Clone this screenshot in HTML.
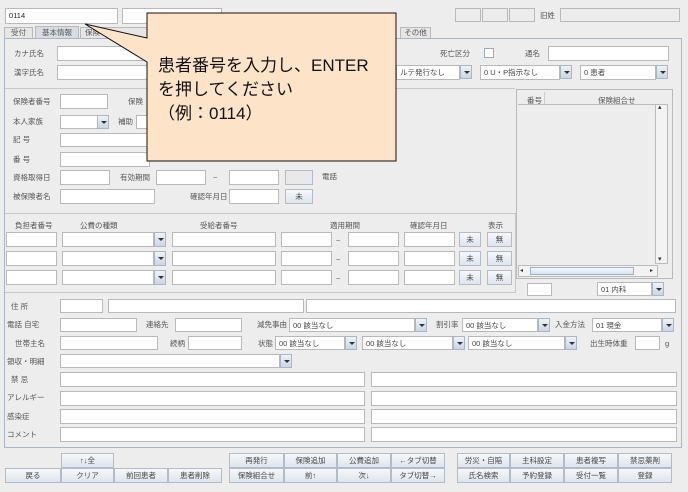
<!DOCTYPE html>
<html><head><meta charset="utf-8"><style>
*{margin:0;padding:0;box-sizing:border-box}
body{width:688px;height:492px;background:#ededed;position:relative;overflow:hidden;font-family:"Liberation Sans","Noto Sans CJK JP",sans-serif;font-size:7.5px;color:#555}
div{position:absolute}
.f{background:#fff;border:1px solid #b9b9b9}
.l{white-space:nowrap;line-height:10px}
.a{background:linear-gradient(#eef3f8,#c9d6e3);border:1px solid #a9b6c4;width:12px;height:14px}
.a:after{content:"";position:absolute;left:3px;top:5px;border-left:3px solid transparent;border-right:3px solid transparent;border-top:3px solid #333}
.b{background:linear-gradient(#f6f8fa,#dde5ee);border:1px solid #b1bcc8;text-align:center;line-height:13px;font-size:7.5px;color:#444}
.t{font-size:7.5px;color:#444;white-space:nowrap;line-height:13px;padding-left:3px}
</style></head><body>
<div class="f" style="left:5px;top:8px;width:113px;height:16px"><span class="t" style="color:#222">0114</span></div>
<div class="f" style="left:122px;top:8px;width:100px;height:16px"></div>
<div class="f" style="left:455px;top:8px;width:26px;height:14px;background:#ececec"></div>
<div class="f" style="left:482px;top:8px;width:26px;height:14px;background:#ececec"></div>
<div class="f" style="left:509px;top:8px;width:26px;height:14px;background:#ececec"></div>
<div class="l" style="left:540px;top:11px">旧姓</div>
<div class="f" style="left:560px;top:8px;width:120px;height:14px;background:#ececec"></div>
<div class="f" style="left:4px;top:27px;width:29px;height:12px;background:#e6e6e6;text-align:center;line-height:10px">受付</div>
<div class="f" style="left:35px;top:26px;width:44px;height:13px;background:#d8dde4;text-align:center;line-height:11px;border-bottom:none">基本情報</div>
<div class="f" style="left:80px;top:27px;width:70px;height:12px;background:#e6e6e6;line-height:10px;padding-left:4px">保険</div>
<div class="f" style="left:400px;top:27px;width:31px;height:12px;background:#e6e6e6;text-align:center;line-height:10px">その他</div>
<div style="left:4px;top:38px;width:678px;height:410px;border:1px solid #aab6c4"></div>
<div class="l" style="left:14px;top:49px">カナ氏名</div>
<div class="f" style="left:57px;top:46px;width:100px;height:15px"></div>
<div class="l" style="left:14px;top:68px">漢字氏名</div>
<div class="f" style="left:57px;top:65px;width:100px;height:15px"></div>
<div class="l" style="left:440px;top:49px">死亡区分</div>
<div class="f" style="left:484px;top:48px;width:10px;height:10px;border-color:#9ab"></div>
<div class="l" style="left:525px;top:49px">通名</div>
<div class="f" style="left:548px;top:46px;width:121px;height:15px"></div>
<div class="f" style="left:396px;top:65px;width:64px;height:15px"><span class="t">ルテ発行なし</span></div><div class="a" style="left:460px;top:65px"></div>
<div class="f" style="left:480px;top:65px;width:80px;height:15px"><span class="t">0 U・P指示なし</span></div><div class="a" style="left:560px;top:65px"></div>
<div class="f" style="left:580px;top:65px;width:76px;height:15px"><span class="t">0 患者</span></div><div class="a" style="left:656px;top:65px"></div>
<div style="left:5px;top:88px;width:510px;height:1px;background:#c8c8c8"></div>
<div class="l" style="left:13px;top:97px">保険者番号</div><div class="f" style="left:60px;top:94px;width:48px;height:15px"></div>
<div class="l" style="left:128px;top:97px">保険</div>
<div class="l" style="left:13px;top:117px">本人家族</div><div class="f" style="left:60px;top:115px;width:38px;height:14px"></div><div class="a" style="left:97px;top:115px"></div>
<div class="l" style="left:118px;top:117px">補助</div><div class="f" style="left:136px;top:115px;width:20px;height:14px"></div>
<div class="l" style="left:13px;top:135px">記 号</div><div class="f" style="left:60px;top:133px;width:90px;height:14px"></div>
<div class="l" style="left:13px;top:155px">番 号</div><div class="f" style="left:60px;top:152px;width:90px;height:15px"></div>
<div class="l" style="left:13px;top:173px">資格取得日</div><div class="f" style="left:60px;top:170px;width:50px;height:15px"></div>
<div class="l" style="left:120px;top:173px">有効期間</div><div class="f" style="left:156px;top:170px;width:50px;height:15px"></div>
<div class="l" style="left:213px;top:173px">~</div><div class="f" style="left:229px;top:170px;width:50px;height:15px"></div>
<div class="b" style="left:285px;top:170px;width:28px;height:15px;background:#e9e9e9"></div>
<div class="l" style="left:322px;top:172px">電話</div>
<div class="l" style="left:13px;top:192px">被保険者名</div><div class="f" style="left:60px;top:189px;width:95px;height:15px"></div>
<div class="l" style="left:190px;top:192px">確認年月日</div><div class="f" style="left:229px;top:189px;width:50px;height:15px"></div>
<div class="b" style="left:285px;top:189px;width:28px;height:15px">未</div>
<div style="left:516px;top:89px;width:157px;height:190px;border:1px solid #b9b9b9"></div>
<div class="l" style="left:527px;top:96px">番号</div>
<div class="l" style="left:598px;top:96px">保険組合せ</div>
<div style="left:518px;top:104px;width:137px;height:1px;background:#bbb"></div>
<div style="left:544px;top:92px;width:1px;height:12px;background:#ccc"></div>
<div style="left:655px;top:104px;width:13px;height:160px;border:1px solid #bbb;background:#f3f3f3"></div>
<div class="l" style="left:658px;top:103px;font-size:7px;color:#333">▴</div>
<div class="l" style="left:658px;top:255px;font-size:7px;color:#333">▾</div>
<div style="left:518px;top:265px;width:140px;height:12px;border:1px solid #bbb;background:#f3f3f3"></div>
<div style="left:530px;top:267px;width:104px;height:8px;border:1px solid #9cb0c8;background:linear-gradient(#f4f8fc,#d6e2ee)"></div>
<div class="l" style="left:520px;top:266px;font-size:6px;color:#333">◂</div>
<div class="l" style="left:650px;top:266px;font-size:6px;color:#333">▸</div>
<div class="f" style="left:527px;top:283px;width:25px;height:13px"></div>
<div class="f" style="left:597px;top:282px;width:55px;height:14px"><span class="t">01 内科</span></div><div class="a" style="left:652px;top:282px"></div>
<div style="left:5px;top:213px;width:511px;height:1px;background:#c8c8c8"></div>
<div style="left:515px;top:213px;width:1px;height:80px;background:#c8c8c8"></div>
<div class="l" style="left:15px;top:221px">負担者番号</div>
<div class="l" style="left:80px;top:221px">公費の種類</div>
<div class="l" style="left:200px;top:221px">受給者番号</div>
<div class="l" style="left:330px;top:221px">適用期間</div>
<div class="l" style="left:410px;top:221px">確認年月日</div>
<div class="l" style="left:488px;top:221px">表示</div>
<div style="left:0;top:232px">
<div class="f" style="left:6px;top:0;width:51px;height:15px"></div><div class="f" style="left:62px;top:0;width:92px;height:15px"></div><div class="a" style="left:154px;top:0;height:15px"></div><div class="f" style="left:172px;top:0;width:104px;height:15px"></div><div class="f" style="left:281px;top:0;width:51px;height:15px"></div><div class="l" style="left:336px;top:4px">~</div><div class="f" style="left:348px;top:0;width:51px;height:15px"></div><div class="f" style="left:404px;top:0;width:51px;height:15px"></div><div class="b" style="left:459px;top:0;width:22px;height:15px">未</div><div class="b" style="left:487px;top:0;width:25px;height:15px">無</div></div>
<div style="left:0;top:251px">
<div class="f" style="left:6px;top:0;width:51px;height:15px"></div><div class="f" style="left:62px;top:0;width:92px;height:15px"></div><div class="a" style="left:154px;top:0;height:15px"></div><div class="f" style="left:172px;top:0;width:104px;height:15px"></div><div class="f" style="left:281px;top:0;width:51px;height:15px"></div><div class="l" style="left:336px;top:4px">~</div><div class="f" style="left:348px;top:0;width:51px;height:15px"></div><div class="f" style="left:404px;top:0;width:51px;height:15px"></div><div class="b" style="left:459px;top:0;width:22px;height:15px">未</div><div class="b" style="left:487px;top:0;width:25px;height:15px">無</div></div>
<div style="left:0;top:270px">
<div class="f" style="left:6px;top:0;width:51px;height:15px"></div><div class="f" style="left:62px;top:0;width:92px;height:15px"></div><div class="a" style="left:154px;top:0;height:15px"></div><div class="f" style="left:172px;top:0;width:104px;height:15px"></div><div class="f" style="left:281px;top:0;width:51px;height:15px"></div><div class="l" style="left:336px;top:4px">~</div><div class="f" style="left:348px;top:0;width:51px;height:15px"></div><div class="f" style="left:404px;top:0;width:51px;height:15px"></div><div class="b" style="left:459px;top:0;width:22px;height:15px">未</div><div class="b" style="left:487px;top:0;width:25px;height:15px">無</div></div>
<div style="left:5px;top:292px;width:511px;height:1px;background:#c8c8c8"></div>
<div class="l" style="left:11px;top:302px">住 所</div>
<div class="f" style="left:60px;top:299px;width:43px;height:14px"></div><div class="f" style="left:108px;top:299px;width:196px;height:14px"></div><div class="f" style="left:306px;top:299px;width:370px;height:14px"></div>
<div class="l" style="left:7px;top:320px">電話 自宅</div><div class="f" style="left:60px;top:318px;width:77px;height:14px"></div>
<div class="l" style="left:146px;top:320px">連絡先</div><div class="f" style="left:175px;top:318px;width:67px;height:14px"></div>
<div class="l" style="left:257px;top:320px">減免事由</div><div class="f" style="left:289px;top:318px;width:126px;height:14px"><span class="t">00 該当なし</span></div><div class="a" style="left:415px;top:318px"></div>
<div class="l" style="left:436px;top:320px">割引率</div><div class="f" style="left:462px;top:318px;width:76px;height:14px"><span class="t">00 該当なし</span></div><div class="a" style="left:538px;top:318px"></div>
<div class="l" style="left:555px;top:320px">入金方法</div><div class="f" style="left:592px;top:318px;width:70px;height:14px"><span class="t">01 現金</span></div><div class="a" style="left:662px;top:318px"></div>
<div class="l" style="left:15px;top:339px">世帯主名</div><div class="f" style="left:60px;top:336px;width:98px;height:14px"></div>
<div class="l" style="left:170px;top:339px">続柄</div><div class="f" style="left:188px;top:336px;width:54px;height:14px"></div>
<div class="l" style="left:258px;top:339px">状態</div><div class="f" style="left:275px;top:336px;width:70px;height:14px"><span class="t">00 該当なし</span></div><div class="a" style="left:345px;top:336px"></div>
<div class="f" style="left:362px;top:336px;width:91px;height:14px"><span class="t">00 該当なし</span></div><div class="a" style="left:453px;top:336px"></div>
<div class="f" style="left:468px;top:336px;width:97px;height:14px"><span class="t">00 該当なし</span></div><div class="a" style="left:565px;top:336px"></div>
<div class="l" style="left:590px;top:339px">出生時体重</div><div class="f" style="left:635px;top:336px;width:25px;height:14px"></div><div class="l" style="left:665px;top:339px">g</div>
<div class="l" style="left:7px;top:357px">領収・明細</div><div class="f" style="left:60px;top:354px;width:220px;height:14px"></div><div class="a" style="left:280px;top:354px"></div>
<div class="l" style="left:11px;top:375px">禁 忌</div><div class="f" style="left:60px;top:372px;width:305px;height:15px"></div><div class="f" style="left:371px;top:372px;width:306px;height:15px"></div>
<div class="l" style="left:7px;top:393px">アレルギー</div><div class="f" style="left:60px;top:391px;width:305px;height:15px"></div><div class="f" style="left:371px;top:391px;width:306px;height:15px"></div>
<div class="l" style="left:7px;top:412px">感染症</div><div class="f" style="left:60px;top:409px;width:305px;height:15px"></div><div class="f" style="left:371px;top:409px;width:306px;height:15px"></div>
<div class="l" style="left:7px;top:430px">コメント</div><div class="f" style="left:60px;top:427px;width:305px;height:15px"></div><div class="f" style="left:371px;top:427px;width:306px;height:15px"></div>
<div class="b" style="left:61px;top:453px;width:53px;height:15px">↑↓全</div>
<div class="b" style="left:5px;top:468px;width:56px;height:15px">戻る</div>
<div class="b" style="left:61px;top:468px;width:53px;height:15px">クリア</div>
<div class="b" style="left:114px;top:468px;width:54px;height:15px">前回患者</div>
<div class="b" style="left:168px;top:468px;width:54px;height:15px">患者削除</div>
<div class="b" style="left:229px;top:453px;width:55px;height:15px">再発行</div>
<div class="b" style="left:284px;top:453px;width:53px;height:15px">保険追加</div>
<div class="b" style="left:337px;top:453px;width:54px;height:15px">公費追加</div>
<div class="b" style="left:391px;top:453px;width:54px;height:15px">←タブ切替</div>
<div class="b" style="left:229px;top:468px;width:55px;height:15px">保険組合せ</div>
<div class="b" style="left:284px;top:468px;width:53px;height:15px">前↑</div>
<div class="b" style="left:337px;top:468px;width:54px;height:15px">次↓</div>
<div class="b" style="left:391px;top:468px;width:54px;height:15px">タブ切替→</div>
<div class="b" style="left:457px;top:453px;width:53px;height:15px">労災・自賠</div>
<div class="b" style="left:510px;top:453px;width:54px;height:15px">主科設定</div>
<div class="b" style="left:564px;top:453px;width:54px;height:15px">患者複写</div>
<div class="b" style="left:618px;top:453px;width:54px;height:15px">禁忌薬剤</div>
<div class="b" style="left:457px;top:468px;width:53px;height:15px">氏名検索</div>
<div class="b" style="left:510px;top:468px;width:54px;height:15px">予約登録</div>
<div class="b" style="left:564px;top:468px;width:54px;height:15px">受付一覧</div>
<div class="b" style="left:618px;top:468px;width:54px;height:15px">登録</div>
<svg style="position:absolute;left:0;top:0" width="688" height="492"><polygon points="147,13 396,13 396,161 147,161 147,62 85,24 147,38" fill="#fde3c8" stroke="#111" stroke-width="1"/></svg>
<div style="left:158px;top:54px;font-size:17px;line-height:24px;color:#111;white-space:nowrap">患者番号を入力し、ENTER<br>を押してください<br>（例：0114）</div>
</body></html>
